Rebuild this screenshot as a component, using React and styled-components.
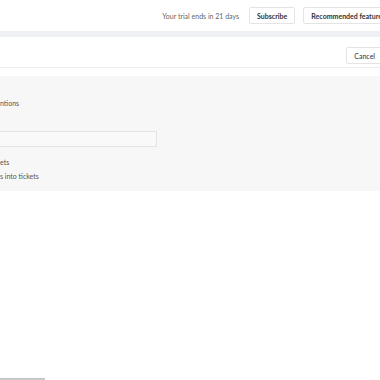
import React from 'react';
import styled, { createGlobalStyle } from 'styled-components';

const Global = createGlobalStyle`
  html, body {
    margin: 0;
    padding: 0;
    background: #fff;
    overflow: hidden;
  }
  body {
    font-family: Lato, "Open Sans", sans-serif;
    color: #333;
  }
`;

const Page = styled.div`
  width: 380px;
  height: 380px;
  display: flex;
  flex-direction: column;
  overflow: hidden;
`;

const TopBar = styled.div`
  height: 31px;
  display: flex;
  align-items: center;
  justify-content: flex-end;
  gap: 8px;
  white-space: nowrap;
  overflow: hidden;
`;

const Trial = styled.span`
  font-size: 7px;
  color: #666;
  margin-right: 2px;
`;

const Button = styled.button`
  height: 17px;
  padding: 0 7px;
  font-family: Lato, "Open Sans", sans-serif;
  font-size: 7px;
  font-weight: 700;
  color: #333;
  background: #fff;
  border: 1px solid #e4e4e4;
  border-radius: 2px;
  white-space: nowrap;
  flex-shrink: 0;
  margin-right: ${(p) => (p.$cut ? '-13px' : '0')};
`;

const Strip = styled.div`
  height: 6px;
  background: #eef0f3;
`;

const Header = styled.div`
  height: 31px;
  display: flex;
  align-items: flex-end;
  justify-content: flex-end;
  padding-bottom: 3px;
  box-sizing: border-box;
  border-bottom: 1px solid #eeeeee;
  overflow: hidden;
`;

const CancelButton = styled(Button)`
  font-weight: 400;
  margin-right: -3px;
`;

const Gap = styled.div`
  height: 8px;
`;

const Section = styled.div`
  height: 115px;
  background: #f7f7f7;
  display: flex;
  flex-direction: column;
  padding-top: 22px;
  box-sizing: border-box;
`;

const Label = styled.div`
  font-size: 7px;
  color: #555;
  line-height: 10px;
  margin-bottom: ${(p) => p.$mb || 0}px;
`;

const Input = styled.div`
  width: 156px;
  height: 14px;
  background: #f9f9f9;
  border: 1px solid #e3e3e3;
  border-left: none;
  margin-top: 1px;
  margin-bottom: 10px;
`;

const Rest = styled.div`
  flex: 1;
  display: flex;
  align-items: flex-end;
`;

const Bar = styled.div`
  width: 45px;
  height: 2px;
  background: #c8c8c8;
`;

export default function App() {
  return (
    <Page>
      <Global />
      <TopBar>
        <Trial>Your trial ends in 21 days</Trial>
        <Button>Subscribe</Button>
        <Button $cut>Recommended features</Button>
      </TopBar>
      <Strip />
      <Header>
        <CancelButton>Cancel</CancelButton>
      </Header>
      <Gap />
      <Section>
        <Label $mb={22}>ntions</Label>
        <Input />
        <Label $mb={4}>ets</Label>
        <Label>s into tickets</Label>
      </Section>
      <Rest>
        <Bar />
      </Rest>
    </Page>
  );
}
